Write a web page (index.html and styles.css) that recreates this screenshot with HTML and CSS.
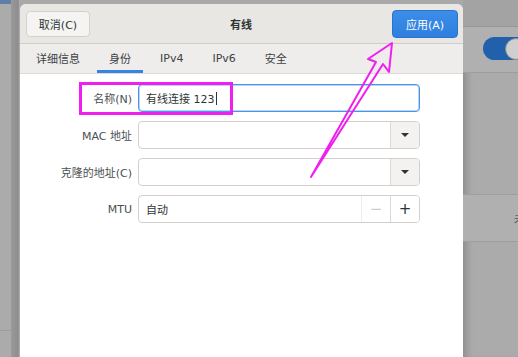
FILE: index.html
```html
<!DOCTYPE html>
<html>
  <head>
    <title>有线</title>
    <meta charset="utf-8" />
    <link rel="stylesheet" href="styles.css">
  </head>
  <body>
    <div class="screen">
      <div class="side-left">
        <div class="strip">
          <div class="strip-top"></div>
          <div class="strip-mid"></div>
          <div class="strip-bottom"></div>
        </div>
        <div class="shade"></div>
      </div>

      <div class="dialog">
        <div class="header">
          <button class="btn">取消(C)</button>
          <div class="title">有线</div>
          <button class="btn btn-apply">应用(A)</button>
        </div>

        <div class="tabs">
          <div class="tab">详细信息</div>
          <div class="tab active">身份</div>
          <div class="tab">IPv4</div>
          <div class="tab">IPv6</div>
          <div class="tab">安全</div>
        </div>

        <div class="form">
          <div class="row">
            <label class="label">名称(N)</label>
            <div class="entry focused"><span class="value">有线连接 123</span><span class="caret"></span></div>
          </div>

          <div class="row">
            <label class="label">MAC 地址</label>
            <div class="entry">
              <span class="value"></span>
              <span class="combo-btn"><span class="tri"></span></span>
            </div>
          </div>

          <div class="row">
            <label class="label">克隆的地址(C)</label>
            <div class="entry">
              <span class="value"></span>
              <span class="combo-btn"><span class="tri"></span></span>
            </div>
          </div>

          <div class="row">
            <label class="label">MTU</label>
            <div class="entry">
              <span class="value">自动</span>
              <span class="spin-btn disabled">−</span>
              <span class="spin-btn">+</span>
            </div>
          </div>
        </div>
      </div>

      <div class="side-right">
        <div class="panel-top"></div>
        <div class="panel-row switch-row">
          <span class="switch"><span class="knob"></span></span>
        </div>
        <div class="panel-row tall"></div>
        <div class="panel-row mid"><span class="cut-text">未</span></div>
        <div class="panel-rest"></div>
      </div>

      <div class="highlight"></div>

      <svg class="arrow" width="518" height="357" viewBox="0 0 518 357">
        <polygon points="392,43 389,72 383,64 311,177 376,62 368,59"
          fill="none" stroke="#f01ef0" stroke-width="2" stroke-linejoin="round" />
      </svg>
    </div>
  </body>
</html>
```

FILE: styles.css
```css
* {
  box-sizing: border-box;
}

body {
  margin: 0;
  background: #a9a9a9;
  font-family: "DejaVu Sans", "Noto Sans CJK SC", sans-serif;
  font-size: 11px;
  color: #2e3436;
}

.screen {
  position: relative;
  width: 518px;
  height: 357px;
  overflow: hidden;
  display: flex;
  flex-direction: row;
  align-items: stretch;
}

/* background window on the left */
.side-left {
  width: 20px;
  flex-shrink: 0;
  display: flex;
  flex-direction: row;
}

.strip {
  width: 11px;
  display: flex;
  flex-direction: column;
  background: #ababab;
}

.strip-top {
  height: 4px;
  background: #5f7fa8;
}

.strip-mid {
  height: 327px;
  border-bottom: 1px solid #9d9d9d;
}

.strip-bottom {
  flex: 1;
}

.shade {
  width: 9px;
  background: linear-gradient(to right, #9a9a9a, #8d8d8d 80%, #b5b5b5);
}

/* dialog */
.dialog {
  width: 443px;
  flex-shrink: 0;
  margin-top: 4px;
  background: #ffffff;
  border-radius: 6px 6px 0 0;
  overflow: hidden;
  display: flex;
  flex-direction: column;
}

.header {
  height: 40px;
  display: flex;
  align-items: center;
  padding: 0 5px 0 6px;
  background: #e9e7e4;
  border-bottom: 1px solid #d2cdc8;
}

.btn {
  font-family: inherit;
  font-size: 11px;
  height: 26px;
  width: 64px;
  padding: 0;
  color: #2e3436;
  background: #f5f4f2;
  border: 1px solid #d6d1cc;
  border-radius: 4px;
}

.btn-apply {
  height: 28px;
  width: 66px;
  color: #ffffff;
  background: linear-gradient(#3c8ce8, #2f7fdf);
  border-color: #2a74cf;
}

.title {
  flex: 1;
  text-align: center;
  font-weight: bold;
  font-size: 11px;
}

.tabs {
  height: 30px;
  display: flex;
  flex-direction: row;
  gap: 5px;
  padding-left: 4px;
  background: #efedeb;
  border-bottom: 1px solid #dedad6;
}

.tab {
  padding: 0 12px;
  display: flex;
  align-items: center;
  color: #3d4244;
  border-bottom: 3px solid transparent;
  padding-top: 2px;
}

.tab.active {
  border-bottom-color: #3584e4;
}

.form {
  flex: 1;
  padding-top: 10px;
  display: flex;
  flex-direction: column;
  gap: 9px;
}

.row {
  display: grid;
  grid-template-columns: 112px 282px;
  column-gap: 6px;
  height: 28px;
}

.label {
  display: flex;
  align-items: center;
  justify-content: flex-end;
  color: #4b4f51;
}

.entry {
  display: flex;
  align-items: stretch;
  border: 1px solid #d4cfca;
  border-radius: 4px;
  background: #ffffff;
  overflow: hidden;
}

.entry.focused {
  border-color: #4b93e8;
  box-shadow: inset 0 0 0 1px #b9d5f5;
}

.value {
  flex: 1;
  display: flex;
  align-items: center;
  padding-left: 7px;
}

.focused .value {
  flex: none;
}

.caret {
  width: 1px;
  margin: 7px 0 6px 1px;
  background: #2e3436;
}

.combo-btn,
.spin-btn {
  width: 29px;
  display: flex;
  align-items: center;
  justify-content: center;
  border-left: 1px solid #dcd8d4;
  background: #f3f2f0;
}

.tri {
  width: 0;
  height: 0;
  border-left: 4px solid transparent;
  border-right: 4px solid transparent;
  border-top: 4px solid #2e3436;
}

.spin-btn {
  background: #ffffff;
  font-size: 15px;
  color: #2e3436;
}

.spin-btn.disabled {
  color: #d0cdca;
  border-left-color: #eeecea;
}

/* background window on the right */
.side-right {
  flex: 1;
  min-width: 0;
  overflow: hidden;
  display: flex;
  flex-direction: column;
  background: #ababab;
  box-shadow: inset 8px 0 6px -4px #8f8f8f;
}

.panel-top {
  height: 27px;
  flex-shrink: 0;
  background: #a3a3a3;
  border-bottom: 1px solid #979797;
}

.panel-row {
  flex-shrink: 0;
  border-bottom: 1px solid #9e9e9e;
}

.switch-row {
  height: 46px;
  background: #b0b0b0;
  display: flex;
  align-items: center;
  padding-left: 20px;
}

.switch {
  flex-shrink: 0;
  width: 50px;
  height: 23px;
  border-radius: 12px;
  background: #2160aa;
  display: flex;
  align-items: center;
  padding-left: 22px;
  margin-top: -2px;
}

.knob {
  flex-shrink: 0;
  width: 22px;
  height: 22px;
  border-radius: 50%;
  background: #cfcfcf;
  border: 1px solid #8a8a8a;
}

.tall {
  height: 122px;
}

.mid {
  height: 47px;
  background: #b0b0b0;
  padding-left: 51px;
  display: flex;
  align-items: center;
}

.cut-text {
  flex-shrink: 0;
  color: #555555;
  font-size: 11px;
}

.panel-rest {
  flex: 1;
}

/* annotations drawn on top of the screenshot */
.highlight {
  position: absolute;
  left: 79px;
  top: 82px;
  width: 154px;
  height: 33px;
  border: 3px solid #f01ef0;
}

.arrow {
  position: absolute;
  left: 0;
  top: 0;
  pointer-events: none;
}
```
